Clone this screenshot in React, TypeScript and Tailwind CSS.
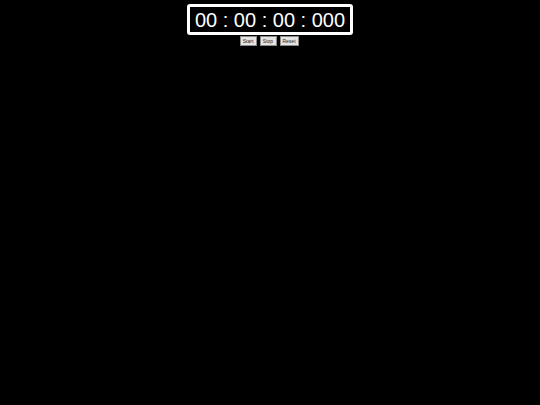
export default function App() {
  return (
    <div className="min-h-[405px] w-full bg-black flex flex-col items-center pt-[4px]" style={{ fontFamily: '"Liberation Sans", Arial, sans-serif' }}>
      <div className="border-[3px] border-white rounded-[3px] h-[31px] w-[166px] flex items-center justify-center text-white text-[20px] leading-none whitespace-pre">
        00 : 00 : 00 : 000
      </div>
      <div className="flex gap-[3px] mt-[1px] ml-[-2px]">
        {[
          ["Start", "w-[17px]"],
          ["Stop", "w-[17px]"],
          ["Reset", "w-[19px]"],
        ].map(([l, w]) => (
          <button
            key={l}
            className={`${w} h-[10px] bg-[#e4e4e4] border border-[#8a8a8a] text-[5px] leading-none text-[#222] flex items-center justify-center`}
          >
            {l}
          </button>
        ))}
      </div>
    </div>
  );
}
